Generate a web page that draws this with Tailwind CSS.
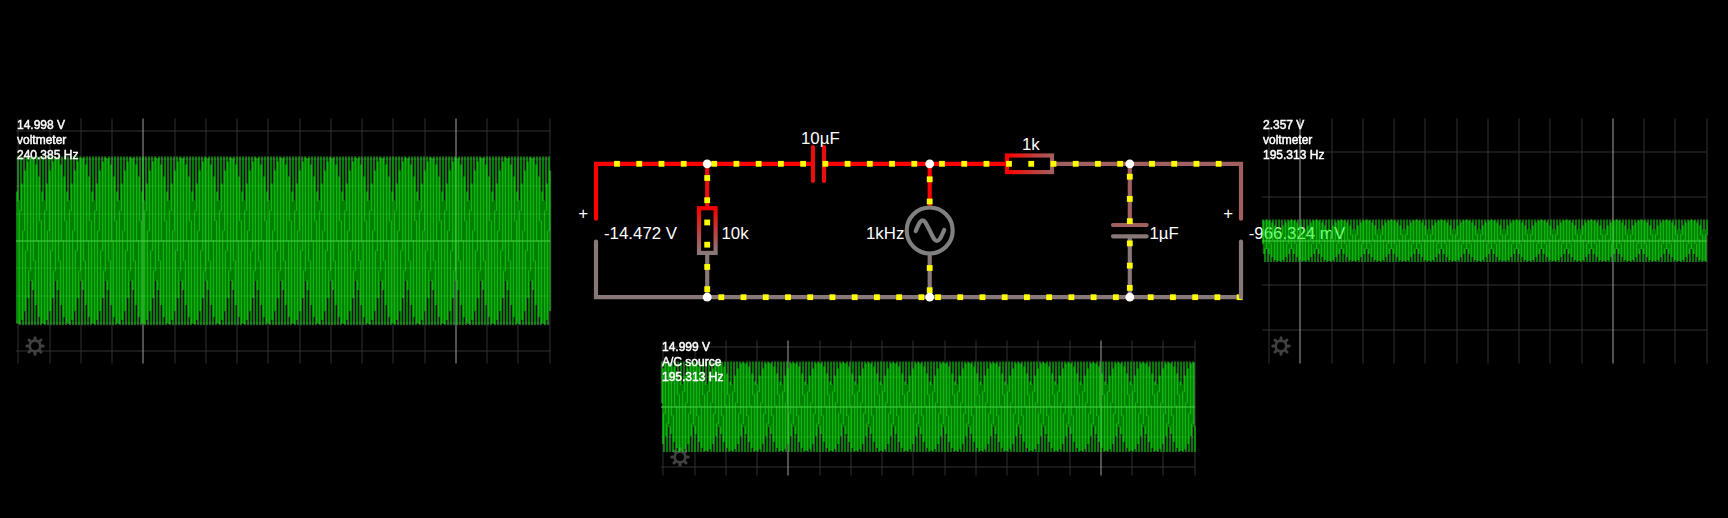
<!DOCTYPE html>
<html lang="en">
<head>
<meta charset="utf-8">
<title>Circuit simulation</title>
<script src="https://cdn.jsdelivr.net/npm/@tailwindcss/browser@4"></script>
</head>
<body class="bg-black">
<main class="relative h-[518px] w-[1728px] overflow-hidden bg-black font-['Liberation_Sans',sans-serif] text-white">
  <svg class="absolute inset-0" width="1728" height="518" fill="none">
    <defs>
      <linearGradient id="down" gradientUnits="userSpaceOnUse" x1="0" y1="208" x2="0" y2="253"><stop stop-color="#f80000"/><stop offset="1" stop-color="#887878"/></linearGradient>
      <linearGradient id="across" gradientUnits="userSpaceOnUse" x1="1007" y1="0" x2="1052" y2="0"><stop stop-color="#ff0000"/><stop offset="1" stop-color="#a06060"/></linearGradient>
      <g id="gear" stroke="#404040" stroke-linecap="round"><circle r="5.300" stroke-width="2.700"/><path stroke-width="3" d="M0-6.500V-8.200M0 6.500V8.200M-6.500 0H-8.200M6.500 0H8.200M4.700-4.700L6-6M4.700 4.700L6 6M-4.700-4.700L-6-6M-4.700 4.700L-6 6"/></g>
    </defs>
    <g stroke-width="4.170" stroke-linecap="round">
      <path stroke="#ff0000" d="M596 218.700V163.800H813M824 163.800H1007"/>
      <path stroke="#ea0e0e" d="M707.200 163.800V206M813 147V181M824 147V181"/>
      <path stroke="#fa0303" d="M929.700 163.800V207"/>
      <path stroke="#a06060" d="M1052 163.800H1241V218.700M1129.800 163.800V225M1113 225H1146.600"/>
      <path stroke="#887878" d="M596 241.500V297.200H1241M707.200 255V297.200M929.700 254V297.200M1129.800 236.300V297.200M1113 236.300H1146.600"/>
      <rect x="699" y="208.200" width="16.600" height="44.700" stroke="url(#down)"/>
      <rect x="1007" y="155.500" width="45" height="16.600" stroke="url(#across)"/>
      <circle cx="929.700" cy="230.500" r="23" stroke="#808080"/>
      <path stroke="#808080" d="M915.700 231C919.500 222 921 220.300 922.700 220.300C924.800 220.300 926 223 929.700 230.500C933.500 238.500 934.800 241 937 241C939.200 241 940.800 238 944.200 230"/>
    </g>
    <g id="dots" fill="#ffff00"></g>
    <path stroke="#887878" stroke-width="4.170" stroke-linecap="round" d="M1241 241.500V297.200"/>
    <g fill="#fff"><circle cx="707.200" cy="163.800" r="4.400"/><circle cx="929.700" cy="163.800" r="4.400"/><circle cx="1129.800" cy="163.800" r="4.400"/><circle cx="707.200" cy="297.200" r="4.400"/><circle cx="929.700" cy="297.200" r="4.400"/><circle cx="1129.800" cy="297.200" r="4.400"/></g>
    <g fill="#fff" font-size="16.850">
      <text x="578.200" y="219">+</text><text x="1223.200" y="219">+</text>
      <text x="604" y="239">-14.472 V</text><text x="721.500" y="239">10k</text>
      <text x="801" y="144">10µF</text><text x="866" y="239">1kHz</text>
      <text x="1022" y="150">1k</text><text x="1149.500" y="239">1µF</text>
      <text x="1248.700" y="239">-966.324 mV</text>
    </g>
    <g id="grid"></g>
    <use href="#gear" x="35" y="346"/><use href="#gear" x="1281" y="346"/><use href="#gear" x="680" y="457"/>
  </svg>
  <canvas id="trace" class="absolute inset-0" width="1728" height="518"></canvas>
  <div class="absolute left-[17px] top-[118px] flex flex-col text-[12px] leading-[15px] [-webkit-text-stroke:0.45px_white]"><span>14.998 V</span><span>voltmeter</span><span>240.385 Hz</span></div>
  <div class="absolute left-[1263px] top-[118px] flex flex-col text-[12px] leading-[15px] [-webkit-text-stroke:0.45px_white]"><span>2.357 V</span><span>voltmeter</span><span>195.313 Hz</span></div>
  <div class="absolute left-[662px] top-[340px] flex flex-col text-[12px] leading-[15px] [-webkit-text-stroke:0.45px_white]"><span>14.999 V</span><span>A/C source</span><span>195.313 Hz</span></div>
</main>
<script>
const NS = 'http://www.w3.org/2000/svg';
const add = (parent, tag, attrs) => {
  const el = document.createElementNS(NS, tag);
  for (const k in attrs) el.setAttribute(k, attrs[k]);
  document.getElementById(parent).appendChild(el);
};
// charge dots: rows share y, columns share x
const step = 22.23;
const rows = [[163.8,617,4],[163.8,714.2,10],[163.8,942,3],[163.8,1009,6],[163.8,1152,4],[297.2,721.3,10],[297.2,938,9],[297.2,1150.7,5]];
const cols = [[707.2,178,6],[929.7,179.3,2],[929.7,268,2],[1129.8,176.7,6]];
const dot = (x, y) => add('dots', 'rect', {x: x - 2.9, y: y - 2.9, width: 5.8, height: 5.8});
rows.forEach(([y, x, n]) => { for (let i = 0; i < n; i++) dot(x + i * step, y); });
cols.forEach(([x, y, n]) => { for (let i = 0; i < n; i++) dot(x, y + i * step); });

// x0..x1: plotted columns; p0: column boundary at which the phase is ph
const scopes = [
  {x0: 17, x1: 550, top: 118, bottom: 363, mid: 241, amp: 84, major: 143.75, ys: [131,159,186,214,268,296,323,351], p0: 20, ph: .74},
  {x0: 1263, x1: 1707, top: 118, bottom: 363, mid: 241, amp: 21, major: 1300.75, ys: [152,197,285,330], p0: 1292, ph: .25},
  {x0: 662, x1: 1195, top: 340, bottom: 475, mid: 407, amp: 45, major: 788.75, ys: [347,377,437,467], p0: 744, ph: .255}
];
const ctx = document.getElementById('trace').getContext('2d');
ctx.strokeStyle = '#00ff00';
for (const s of scopes) {
  const line = (a, b, c, d, color) => add('grid', 'line', {x1: a, y1: b, x2: c, y2: d, stroke: color});
  s.ys.forEach(y => line(s.x0 - 1, y, s.x1, y, '#303030'));
  for (let k = -4; k < 18; k++) {
    const x = Math.floor(s.major + k * 31.25);
    if (x >= s.x0 && x <= s.x1 && k % 10) line(x, s.top + .5, x, s.bottom + .5, '#303030');
  }
  line(s.x0 - 1, s.mid, s.x1, s.mid, '#a0a0a0');
  for (const k of [0, 10]) { const x = Math.floor(s.major + k * 31.25); line(x, s.top + .5, x, s.bottom + .5, '#a0a0a0'); }
  for (let x = s.x0; x <= s.x1; x++) {
    let lo = 1, hi = -1;
    for (let i = 0; i <= 64; i++) {
      const v = Math.sin(2 * Math.PI * (s.ph + .32 * (x - s.p0 + i / 64)));
      lo = Math.min(lo, v); hi = Math.max(hi, v);
    }
    ctx.beginPath();
    ctx.moveTo(x, s.mid - Math.trunc(hi * s.amp) - .5);
    ctx.lineTo(x, s.mid - Math.trunc(lo * s.amp));
    ctx.stroke();
  }
}
// even out the hue of each 2x2 block, keeping every pixel's brightness
const img = ctx.getImageData(0, 0, 1728, 518), d = img.data;
for (let y = 0; y < 518; y += 2) for (let x = 0; x < 1728; x += 2) {
  const at = [0, 4, 1728 * 4, 1728 * 4 + 4].map(o => (y * 1728 + x) * 4 + o);
  const avg = at.reduce((t, i) => t + d[i + 3], 0) / 4;
  for (const i of at) {
    const a = d[i + 3], luma = .587 * a;
    const rb = Math.max(0, luma - .587 * avg), g = luma + .413 * avg, alpha = Math.max(a, g);
    if (!alpha) continue;
    d[i] = d[i + 2] = rb * 255 / alpha;
    d[i + 1] = g * 255 / alpha;
    d[i + 3] = alpha;
  }
}
ctx.putImageData(img, 0, 0);
</script>
</body>
</html>
